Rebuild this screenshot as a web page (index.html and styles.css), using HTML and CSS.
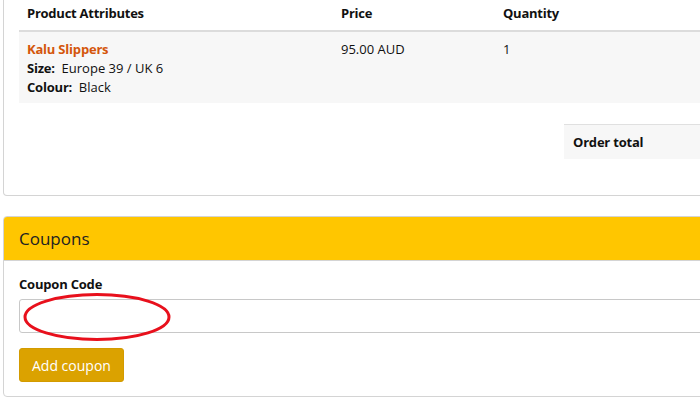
FILE: index.html
```html
<!DOCTYPE html>
<html>
<head>
<meta charset="utf-8">
<link rel="stylesheet" href="styles.css">
</head>
<body>
<div class="page">
  <section class="card order-card">
    <table class="items">
      <thead>
        <tr>
          <th class="col-attr">Product Attributes</th>
          <th class="col-price">Price</th>
          <th class="col-qty">Quantity</th>
        </tr>
      </thead>
      <tbody>
        <tr>
          <td>
            <div class="prod-name">Kalu Slippers</div>
            <div><span class="attr-label">Size:</span>&nbsp; Europe 39 / UK 6</div>
            <div><span class="attr-label">Colour:</span>&nbsp; Black</div>
          </td>
          <td>95.00 AUD</td>
          <td>1</td>
        </tr>
      </tbody>
    </table>
    <div class="totals">
      <div class="total-box">Order total</div>
    </div>
  </section>

  <section class="card coupon-card">
    <div class="card-header">Coupons</div>
    <div class="card-body">
      <label class="field-label" for="coupon">Coupon Code</label>
      <div class="input-wrap">
        <input id="coupon" class="text-input" type="text">
        <svg class="mark" width="152" height="52" viewBox="0 0 152 52"><ellipse cx="75" cy="25" rx="72" ry="22.5" fill="none" stroke="#e8101c" stroke-width="3"/></svg>
      </div>
      <button class="btn">Add coupon</button>
    </div>
  </section>
</div>
</body>
</html>
```

FILE: styles.css
```css
html, body {
  margin: 0;
  padding: 0;
  background: #fff;
}
body {
  font-family: "Open Sans", "DejaVu Sans", sans-serif;
  font-size: 13px;
  color: #111;
  overflow: hidden;
}
.page {
  padding-left: 3px;
  width: 780px;
  display: flex;
  flex-direction: column;
  gap: 20px;
}
.card {
  border: 1px solid #d4d4d4;
  border-radius: 4px;
  background: #fff;
}
.order-card {
  border-top: 0;
  border-top-left-radius: 0;
  padding: 0 15px 36px;
}
.items {
  width: 100%;
  border-collapse: collapse;
}
.items th {
  text-align: left;
  font-weight: 700;
  letter-spacing: -0.25px;
  padding: 4px 8px 7px;
  line-height: 19px;
  border-bottom: 2px solid #dcdcdc;
}
.col-attr { width: 298px; }
.col-price { width: 146px; }
.items td {
  vertical-align: top;
  background: #f7f7f7;
  padding: 8px 8px 6px;
  line-height: 19px;
}
.prod-name {
  color: #d4560c;
  font-weight: 700;
  letter-spacing: -0.2px;
}
.attr-label {
  font-weight: 700;
  letter-spacing: -0.2px;
}
.totals {
  display: flex;
  padding-top: 21px;
  padding-left: 545px;
}
.total-box {
  flex: 1;
  background: #f7f7f7;
  border-top: 1px solid #e0e0e0;
  padding: 8px 9px 7px;
  line-height: 19px;
  font-weight: 700;
  letter-spacing: -0.2px;
}
.card-header {
  background: #ffc600;
  border-bottom: 1px solid #d4d4d4;
  border-radius: 3px 0 0 0;
  padding: 10px 15px 9px;
  font-size: 17px;
  line-height: 24px;
  color: #222;
}
.card-body {
  padding: 14px 15px 14px;
  display: flex;
  flex-direction: column;
  align-items: flex-start;
}
.field-label {
  font-weight: 700;
  letter-spacing: -0.2px;
  line-height: 19px;
  margin-bottom: 5px;
}
.input-wrap {
  position: relative;
  align-self: stretch;
}
.text-input {
  display: block;
  box-sizing: border-box;
  width: 100%;
  height: 34px;
  border: 1px solid #c8c8c8;
  border-radius: 3px;
  background: #fff;
  margin: 0;
}
.mark {
  position: absolute;
  left: 3px;
  top: -7px;
}
.btn {
  margin-top: 15px;
  font-family: "Open Sans", "DejaVu Sans", sans-serif;
  font-size: 14px;
  color: #fff;
  background: #dba200;
  border: 1px solid #d39b00;
  border-radius: 3px;
  height: 34px;
  padding: 0 12px;
}
```
